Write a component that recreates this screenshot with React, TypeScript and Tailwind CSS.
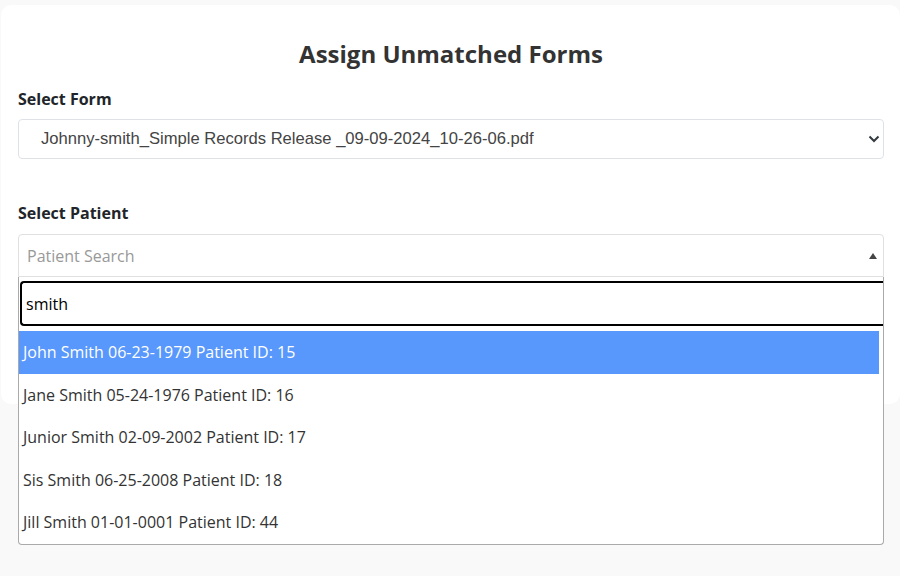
import { useState } from 'react';

const patients = [
  'John Smith 06-23-1979 Patient ID: 15',
  'Jane Smith 05-24-1976 Patient ID: 16',
  'Junior Smith 02-09-2002 Patient ID: 17',
  'Sis Smith 06-25-2008 Patient ID: 18',
  'Jill Smith 01-01-0001 Patient ID: 44',
];

const ui = { fontFamily: '"Open Sans", "Noto Sans", sans-serif' };

const App = () => {
  const [query, setQuery] = useState('smith');
  const [active, setActive] = useState(0);

  return (
    <div className="min-h-screen bg-[#f9f9f9] pt-[5px] pl-[1px]" style={ui}>
      <div className="rounded-[10px] bg-white pt-[35px] pb-[127px] pl-[17px] pr-[16px]">
        <h2 className="text-center text-[24px] leading-[28px] font-bold text-[#333]">
          Assign Unmatched Forms
        </h2>

        <label className="mt-[19px] block text-[16px] leading-[24px] font-bold text-[#212529]">
          Select Form
        </label>
        <div className="relative mt-[8px]">
          <select
            className="h-[40px] w-full appearance-none rounded-[4px] border border-[#dee2e6] bg-white pt-[1px] pl-[22px] text-[16.6px] text-[#444] outline-none"
            style={{ fontFamily: '"Liberation Sans", Arial, sans-serif' }}
            defaultValue="a"
          >
            <option value="a">Johnny-smith_Simple Records Release _09-09-2024_10-26-06.pdf</option>
          </select>
          <svg
            className="pointer-events-none absolute right-[4px] top-[16px]"
            width="12"
            height="8"
            viewBox="0 0 12 8"
          >
            <path d="M1.5 1.5 6 6l4.5-4.5" fill="none" stroke="#343a40" strokeWidth="2" />
          </svg>
        </div>

        <label className="mt-[42px] block text-[16px] leading-[24px] font-bold text-[#212529]">
          Select Patient
        </label>
        <div className="relative mt-[9px]">
          <div className="flex h-[43px] items-center justify-between rounded-t-[4px] border border-[#e0e0e0] pt-[1px] pl-[8px] pr-[6px]">
            <span className="text-[16px] text-[#999]">Patient Search</span>
            <svg width="8" height="6" viewBox="0 0 8 6">
              <path d="M0 6 4 0l4 6z" fill="#444" />
            </svg>
          </div>

          <div className="absolute left-0 right-0 top-full z-10 rounded-b-[4px] border border-t-0 border-[#aaa] bg-white">
            <div className="pt-[4px] pl-[1px]">
              <input
                className="h-[45px] w-full rounded-l-[4px] border-y-2 border-l-2 border-black pt-[1px] pl-[4px] text-[16px] text-black caret-black outline-none"
                value={query}
                onChange={(e) => setQuery(e.target.value)}
                autoFocus
              />
            </div>
            <ul className="mt-[5px] mr-[4px]">
              {patients
                .filter((p) => p.toLowerCase().includes(query.toLowerCase()))
                .map((p, i) => (
                  <li
                    key={p}
                    onMouseEnter={() => setActive(i)}
                    className={
                      i === active
                        ? 'flex h-[42.5px] items-center bg-[#5897fb] pl-[4px] text-[16px] text-white'
                        : 'flex h-[42.5px] items-center pl-[4px] text-[16px] text-[#333]'
                    }
                  >
                    {p}
                  </li>
                ))}
            </ul>
          </div>
        </div>
      </div>
    </div>
  );
};

export default App;
